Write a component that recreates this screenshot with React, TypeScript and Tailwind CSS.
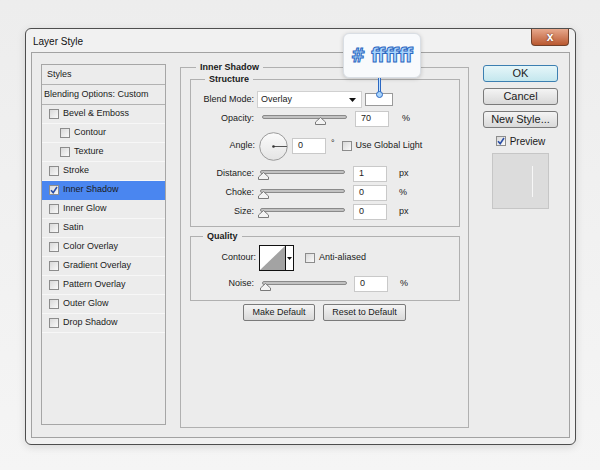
import React from "react";

const styleRows = [
  { name: "Bevel & Emboss" },
  { name: "Contour", indent: true },
  { name: "Texture", indent: true },
  { name: "Stroke" },
  { name: "Inner Shadow", on: true },
  { name: "Inner Glow" },
  { name: "Satin" },
  { name: "Color Overlay" },
  { name: "Gradient Overlay" },
  { name: "Pattern Overlay" },
  { name: "Outer Glow" },
  { name: "Drop Shadow" },
];

function Check({ on = false }: { on?: boolean }) {
  return (
    <span className="flex h-[10px] w-[10px] shrink-0 items-center justify-center border border-[#8c8c8c] bg-linear-to-br from-[#d9d9d9] to-[#fafafa]">
      {on && (
        <svg width="8" height="8" viewBox="0 0 8 8">
          <path d="M1 4.2 L3.2 6.6 L7 1" fill="none" stroke="#2a4ea6" strokeWidth="1.6" />
        </svg>
      )}
    </span>
  );
}

function Slider({ pos }: { pos: number }) {
  return (
    <div className="relative h-[13px] w-[85px] shrink-0">
      <div className="absolute left-0 right-0 top-[3px] h-[4px] rounded-full border border-[#8a8a8a] bg-[#c2c2c2]" />
      {/* thumb */}
      <svg className="absolute top-[5px]" style={{ left: pos - 5 }} width="11" height="8" viewBox="0 0 11 8">
        <polygon points="0.5,7.5 0.5,5 5.5,0.5 10.5,5 10.5,7.5" fill="#f3f3f3" stroke="#7a7a7a" />
      </svg>
    </div>
  );
}

function Field({ value }: { value: string }) {
  return (
    <div className="flex h-[16px] w-[34px] shrink-0 items-center border border-[#c9c9c9] bg-white pl-[5px] text-[9px] text-[#222]">
      {value}
    </div>
  );
}

function Btn({ label, primary = false }: { label: string; primary?: boolean }) {
  return (
    <div
      className={`flex h-[17px] w-[75px] items-center justify-center rounded-[3px] border text-[11px] text-[#1c1c1c] ${
        primary
          ? "border-[#3c7fb1] bg-linear-to-b from-[#e6f6f9] to-[#c4e7ee]"
          : "border-[#7a7a7a] bg-linear-to-b from-[#f4f4f4] to-[#d9d9d9]"
      }`}
    >
      {label}
    </div>
  );
}

export default function App() {
  return (
    <div className="h-[470px] w-[600px] overflow-hidden bg-linear-to-b from-[#ededed] to-[#f5f5f5] pl-[25px] pt-[28px] font-['Liberation_Sans',Arial,sans-serif] text-[#1a1a1a]">
      <div className="relative h-[417px] w-[551px] rounded-[6px] border border-[#4e4e4e] bg-[#f1f1f1] shadow-[0_2px_8px_rgba(0,0,0,0.12)]">
        {/* title bar */}
        <div className="flex h-[23px] items-start justify-between">
          <span className="pl-[7px] pt-[5px] text-[10px] text-[#111]">Layer Style</span>
          <div className="mr-[6px] flex h-[17px] w-[38px] items-center justify-center rounded-b-[4px] border border-t-0 border-[#71402a] bg-linear-to-b from-[#e7a88c] to-[#b9582f] text-[12px] font-bold leading-none text-white [text-shadow:0_0_2px_#5a2410]">
            x
          </div>
        </div>

        {/* body */}
        <div className="mx-[5px] flex h-[386px] border border-[#a2a2a2] bg-[#ececec] pl-[9px] pt-[9px]">
          {/* left list */}
          <div className="mt-[2px] h-[361px] w-[125px] shrink-0 border border-[#a6a6a6] bg-[#ececec] text-[9px]">
            <div className="flex h-[20px] items-center border-b border-[#b2b2b2] pl-[5px]">Styles</div>
            <div className="flex h-[20px] items-center border-b border-[#b2b2b2] pl-[2px]">Blending Options: Custom</div>
            {styleRows.map((r) => (
              <div
                key={r.name}
                className={`flex h-[19px] items-center gap-[4px] border-b ${
                  r.on ? "border-[#4a86f0] bg-[#4a86f0]" : "border-[#f7f7f7]"
                } ${r.indent ? "pl-[18px]" : "pl-[7px]"}`}
              >
                <Check on={r.on} />
                <span>{r.name}</span>
              </div>
            ))}
          </div>

          {/* middle group */}
          <div className="ml-[14px] flex w-[289px] shrink-0 flex-col">
            <fieldset className="h-[366px] border border-[#b0b0b0] pl-[9px] pr-[8px] text-[9px]">
              <legend className="ml-[6px] px-[4px] font-bold leading-[11px]">Inner Shadow</legend>

              <fieldset className="mt-[1px] border border-[#b0b0b0] pb-[5px] pt-[5px]">
                <legend className="ml-[14px] px-[4px] font-bold leading-[11px]">Structure</legend>

                <div className="flex h-[19px] items-center">
                  <span className="w-[63px] text-right">Blend Mode:</span>
                  <div className="ml-[3px] flex h-[17px] w-[105px] items-center justify-between border border-[#d0d0d0] bg-white pl-[3px] pr-[5px]">
                    <span>Overlay</span>
                    <svg width="7" height="4" viewBox="0 0 7 4">
                      <polygon points="0,0 7,0 3.5,4" fill="#111" />
                    </svg>
                  </div>
                  <div className="ml-[3px] h-[13px] w-[28px] border border-[#9a9a9a] bg-white" />
                </div>

                <div className="flex h-[19px] items-center">
                  <span className="w-[63px] text-right">Opacity:</span>
                  <div className="ml-[8px]">
                    <Slider pos={58} />
                  </div>
                  <div className="ml-[8px]">
                    <Field value="70" />
                  </div>
                  <span className="ml-[13px]">%</span>
                </div>

                <div className="flex h-[36px] items-center">
                  <span className="w-[64px] text-right">Angle:</span>
                  <svg className="ml-[4px]" width="29" height="29" viewBox="0 0 29 29">
                    <defs>
                      <linearGradient id="dial" x1="0" y1="0" x2="0" y2="1">
                        <stop offset="0" stopColor="#fbfbfb" />
                        <stop offset="1" stopColor="#e4e4e4" />
                      </linearGradient>
                    </defs>
                    <circle cx="14.5" cy="14.5" r="13.8" fill="url(#dial)" stroke="#9b9b9b" />
                    <line x1="14.5" y1="14.5" x2="28" y2="14.5" stroke="#555" />
                    <circle cx="14.5" cy="14.5" r="1.3" fill="#333" />
                  </svg>
                  <div className="ml-[4px]">
                    <Field value="0" />
                  </div>
                  <span className="ml-[5px] -mt-[4px]">°</span>
                  <div className="ml-[7px] flex items-center gap-[4px]">
                    <Check />
                    <span>Use Global Light</span>
                  </div>
                </div>

                {[
                  ["Distance:", "1", "px"],
                  ["Choke:", "0", "%"],
                  ["Size:", "0", "px"],
                ].map(([l, v, u]) => (
                  <div key={l} className="flex h-[19px] items-center">
                    <span className="w-[63px] text-right">{l}</span>
                    <div className="ml-[6px]">
                      <Slider pos={3} />
                    </div>
                    <div className="ml-[8px]">
                      <Field value={v} />
                    </div>
                    <span className="ml-[12px]">{u}</span>
                  </div>
                ))}
              </fieldset>

              <fieldset className="mt-[4px] border border-[#b0b0b0] pb-[8px] pt-[3px]">
                <legend className="ml-[12px] px-[4px] font-bold leading-[11px]">Quality</legend>
                <div className="flex h-[26px] items-center">
                  <span className="w-[65px] text-right">Contour:</span>
                  <div className="ml-[3px] flex h-[26px] border border-[#111]">
                    <svg width="25" height="24" viewBox="0 0 25 24">
                      <rect width="25" height="24" fill="#fff" />
                      <polygon points="0,24 25,0 25,24" fill="#a3a3a3" />
                    </svg>
                    <div className="flex w-[8px] items-center justify-center border-l border-[#111] bg-white">
                      <svg width="5" height="3" viewBox="0 0 5 3">
                        <polygon points="0,0 5,0 2.5,3" fill="#111" />
                      </svg>
                    </div>
                  </div>
                  <div className="ml-[11px] flex items-center gap-[4px]">
                    <Check />
                    <span>Anti-aliased</span>
                  </div>
                </div>
                <div className="mt-[5px] flex h-[16px] items-center">
                  <span className="w-[63px] text-right">Noise:</span>
                  <div className="ml-[8px]">
                    <Slider pos={3} />
                  </div>
                  <div className="ml-[7px]">
                    <Field value="0" />
                  </div>
                  <span className="ml-[12px]">%</span>
                </div>
              </fieldset>

              <div className="mt-[3px] flex justify-center gap-[8px] pr-[1px]">
                <div className="flex h-[17px] w-[72px] items-center justify-center rounded-[2px] border border-[#7a7a7a] bg-linear-to-b from-[#f4f4f4] to-[#d9d9d9]">
                  Make Default
                </div>
                <div className="flex h-[17px] w-[83px] items-center justify-center rounded-[2px] border border-[#7a7a7a] bg-linear-to-b from-[#f4f4f4] to-[#d9d9d9]">
                  Reset to Default
                </div>
              </div>
            </fieldset>
          </div>

          {/* right column */}
          <div className="ml-[14px] flex w-[75px] shrink-0 flex-col items-center gap-[6px] pt-[3px]">
            <Btn label="OK" primary />
            <Btn label="Cancel" />
            <Btn label="New Style..." />
            <div className="mt-[1px] flex h-[12px] items-center gap-[4px] text-[10px]">
              <Check on />
              <span>Preview</span>
            </div>
            <div className="flex h-[56px] w-[57px] items-center justify-end border border-[#c6c6c6] bg-[#dcdcdc] pr-[15px]">
              <div className="h-[31px] w-px bg-[#f7f7f7]" />
            </div>
          </div>
        </div>

        {/* colour callout */}
        <div className="absolute left-[317px] top-[4px] flex h-[45px] w-[78px] items-center justify-center rounded-[6px] border border-[#d9dee4] bg-[#f8fafc] shadow-[0_1px_4px_rgba(0,0,0,0.18)]">
          <span className="font-['DejaVu_Sans_Condensed','Liberation_Sans_Narrow',sans-serif] text-[19px] font-bold text-[#a9d4fb] [-webkit-text-stroke:1px_#2c68c2]">
            # ffffff
          </span>
        </div>
        <div className="absolute left-[352px] top-[49px] h-[15px] w-[3px] border-x border-[#2c68c2] bg-[#bfe0ff]" />
        <div className="absolute left-[350px] top-[62px] h-[7px] w-[7px] rounded-full border border-[#2c68c2] bg-[#a9d4fb]" />
      </div>
    </div>
  );
}
